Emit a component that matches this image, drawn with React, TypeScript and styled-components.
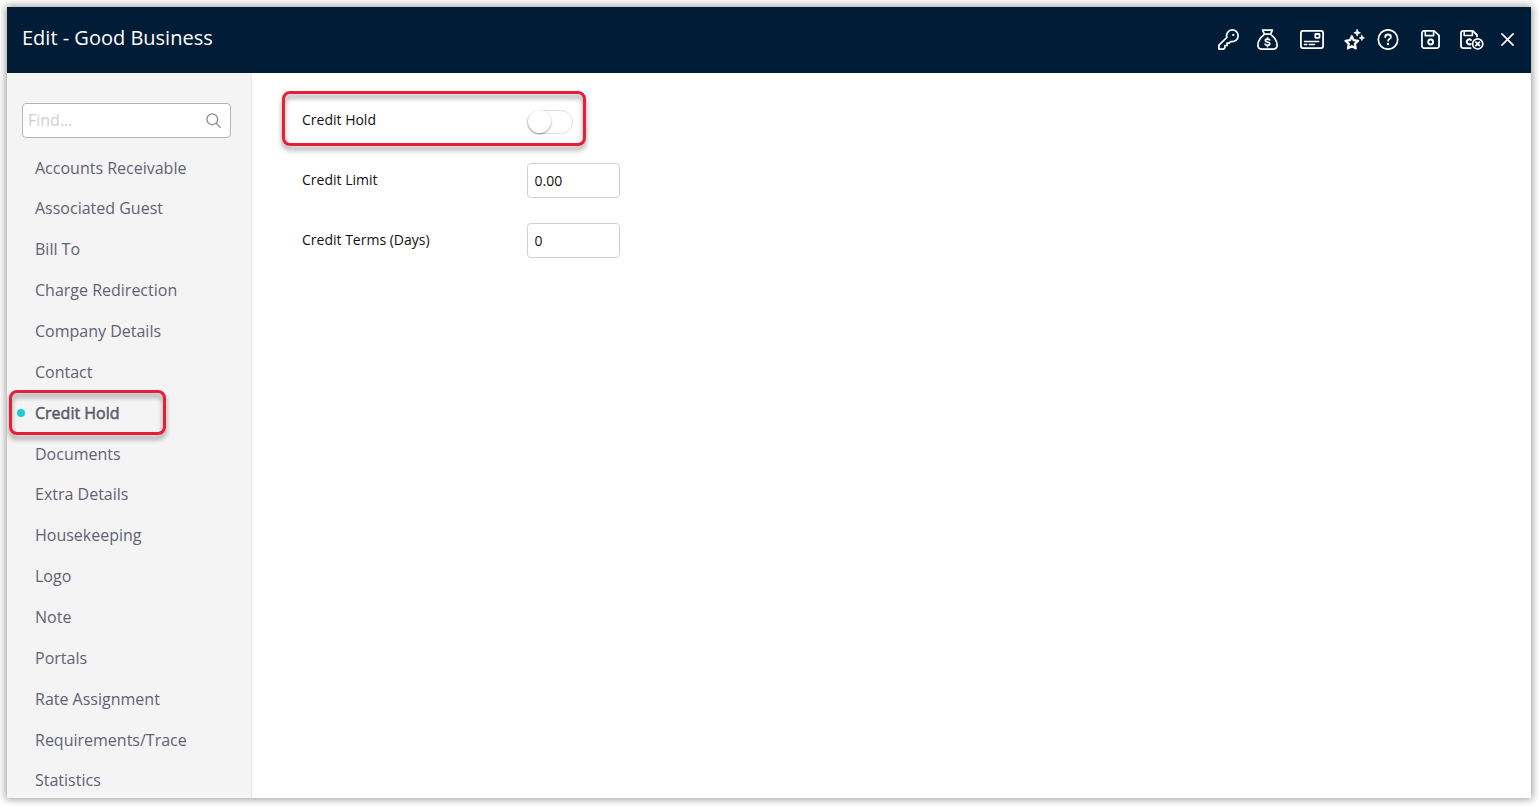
import React from "react";
import styled, { createGlobalStyle, css } from "styled-components";

const GlobalStyle = createGlobalStyle`
  *, *::before, *::after { box-sizing: border-box; }
  body {
    margin: 0;
    background: #fff;
    font-family: "Open Sans", "Noto Sans", sans-serif;
    overflow: hidden;
  }
`;

const Page = styled.div`
  height: 806px;
  padding: 7px 8px 8px 7px;
`;

const Dialog = styled.div`
  display: flex;
  flex-direction: column;
  height: 791px;
  background: #fff;
  box-shadow: 0 0 8px 1px rgba(0, 0, 0, 0.42);
`;

const Header = styled.header`
  display: flex;
  justify-content: space-between;
  flex: 0 0 66px;
  padding: 0 17px 0 15px;
  background: #001c36;
  color: #fff;
`;

const Title = styled.h1`
  margin: 0;
  padding-top: 17px;
  font-size: 20px;
  line-height: 28px;
  font-weight: 400;
`;

const Actions = styled.div`
  display: flex;
  align-items: center;
  height: 65px;
`;

const Action = styled.button<{ $gap?: number }>`
  display: flex;
  margin: 0 0 0 ${(p) => p.$gap ?? 0}px;
  padding: 0;
  border: 0;
  background: none;
  color: #fff;

  svg {
    display: block;
    fill: none;
    stroke: currentColor;
    stroke-width: 1.8;
    stroke-linecap: round;
    stroke-linejoin: round;
  }
`;

const Body = styled.div`
  display: flex;
  flex: 1;
  min-height: 0;
`;

const Sidebar = styled.aside`
  flex: 0 0 245px;
  padding-top: 30px;
  background: #f4f4f4;
  border-right: 1px solid #e8e8e8;
  overflow: hidden;
`;

const Search = styled.label`
  display: flex;
  align-items: center;
  width: 209px;
  height: 35px;
  margin-left: 15px;
  padding: 0 9.5px 0 5px;
  background: #fff;
  border: 1px solid #b4b4b4;
  border-radius: 4px;

  svg {
    flex: none;
  }
`;

const SearchInput = styled.input`
  flex: 1;
  min-width: 0;
  padding: 0 0 2px;
  border: 0;
  outline: 0;
  background: none;
  font: 16px "Open Sans", sans-serif;

  &::placeholder {
    color: #cfcfcf;
  }
`;

const Menu = styled.ul`
  margin: 9.125px 0 0;
  padding: 0;
  list-style: none;
`;

const MenuItem = styled.li<{ $active?: boolean }>`
  position: relative;
  display: flex;
  align-items: center;
  height: 40.86px;
  padding-left: 28px;
  font-size: 16px;
  line-height: 22px;
  color: #626273;
  ${(p) =>
    p.$active &&
    css`
      color: #5a5a6c;
      -webkit-text-stroke: 0.5px #5a5a6c;

      &::before {
        content: "";
        position: absolute;
        left: 10px;
        top: 16.3px;
        width: 8px;
        height: 8px;
        border-radius: 50%;
        background: #1fcbd6;
      }
    `}
`;

const Highlight = styled.span<{ $x: number; $y: number; $w: number; $h: number }>`
  position: absolute;
  left: ${(p) => p.$x}px;
  top: ${(p) => p.$y}px;
  width: ${(p) => p.$w}px;
  height: ${(p) => p.$h}px;
  border: 3px solid #e51f35;
  border-radius: 8px;
  filter: drop-shadow(0 4px 2.5px rgba(0, 0, 0, 0.42));
  pointer-events: none;
`;

const Content = styled.main`
  flex: 1;
  padding: 30px 0 0 50px;
`;

const Field = styled.div`
  position: relative;
  display: flex;
  height: 60px;
`;

const FieldLabel = styled.label`
  width: 225px;
  padding-top: 7px;
  font-size: 14px;
  line-height: 20px;
  color: #111;
`;

const FieldInput = styled.input`
  width: 93px;
  height: 35px;
  padding: 0 6.5px 1px;
  border: 1px solid #d0d0d0;
  border-radius: 4px;
  background: #fff;
  outline: 0;
  font: 14px "Open Sans", sans-serif;
  color: #111;
`;

const Toggle = styled.button`
  display: flex;
  width: 46px;
  height: 24px;
  margin: 7px 0 0;
  padding: 0;
  border: 1px solid #dedede;
  border-radius: 12px;
  background: #fff;
`;

const Knob = styled.span`
  width: 23px;
  height: 23px;
  margin: -1px 0 0 -0.5px;
  border-radius: 50%;
  background: #fff;
  box-shadow: 0 1px 2px rgba(0, 0, 0, 0.4);
`;

const items = [
  "Accounts Receivable",
  "Associated Guest",
  "Bill To",
  "Charge Redirection",
  "Company Details",
  "Contact",
  "Credit Hold",
  "Documents",
  "Extra Details",
  "Housekeeping",
  "Logo",
  "Note",
  "Portals",
  "Rate Assignment",
  "Requirements/Trace",
  "Statistics",
];

const KeyIcon = () => (
  <svg width="21" height="21" viewBox="0 0 22 22">
    <path d="M9.2 8.9C8.2 4.6 10.9 1 14.9 1c3.5 0 6.2 2.6 6.2 6 0 4.2-3.6 7-7.7 6.1L11.6 14.9H9.500v2.400H7.300v2.300L6 21H1v-4z" />
    <circle cx="16" cy="6.200" r="1.200" fill="currentColor" stroke="none" />
  </svg>
);

const MoneyIcon = () => (
  <svg width="21" height="21" viewBox="0 0 22 22">
    <path d="M7.700 5.300 5.900 1.100h10.200l-1.800 4.200zM7.700 5.600C4.800 8 .9 12.600.9 16.700.9 19.800 3 21 5.400 21h11.200c2.400 0 4.500-1.200 4.500-4.300 0-4.100-3.900-8.700-6.800-11.100" />
    <path d="M13.300 11.400c-.5-.7-1.300-.9-2.300-.9-1.400 0-2.300.6-2.300 1.600 0 2.300 4.700 1 4.700 3.300 0 1-1 1.700-2.400 1.700-1.100 0-2-.4-2.500-1.100M11 9.200v1.300M11 17.100v1.300" />
  </svg>
);

const CardIcon = () => (
  <svg width="24" height="19" viewBox="0 0 24 19">
    <rect x="0.900" y="0.900" width="22.200" height="17.200" rx="2" />
    <rect x="15.300" y="4" width="4.200" height="3.800" rx="0.500" />
    <path d="M4.500 11.500h14.200M4.500 14.500h2.300M9.300 14.500h5.200" strokeWidth="1.500" />
  </svg>
);

const StarsIcon = () => (
  <svg width="21" height="21" viewBox="0 0 22 22">
    <path d="M8.200 7.600 10.100 11.700l4.700.6-3.400 3.300.9 4.700-4.100-2.300-4.100 2.300.9-4.700L1.600 12.300l4.700-.6z" strokeWidth="2.300" />
    <path d="M13.800.5 14.800 3l2.500 1-2.500 1-1 2.500-1-2.500-2.500-1 2.500-1zM18.700 6.500l.8 2 2 .8-2 .8-.8 2-.8-2-2-.8 2-.8z" fill="currentColor" strokeWidth="0.700" />
  </svg>
);

const HelpIcon = () => (
  <svg width="22" height="21" viewBox="0 0 22 21">
    <circle cx="11" cy="10.500" r="9.700" strokeWidth="1.700" />
    <path d="M8.200 8.100c.1-1.700 1.200-2.600 2.800-2.600 1.700 0 2.900 1 2.900 2.400 0 2-2.800 2.200-2.800 3.900" />
    <circle cx="11" cy="15" r="1.200" fill="currentColor" stroke="none" />
  </svg>
);

const SaveIcon = () => (
  <svg width="19" height="19" viewBox="0.3 0.1 19.500 19.500">
    <path d="M3.500 1H13.600L18.800 5.700V16.500a2.200 2.200 0 0 1-2.200 2.200H3.500A2.200 2.200 0 0 1 1.300 16.500V3.200A2.200 2.200 0 0 1 3.500 1z" />
    <path d="M4.700 1.300V5.900H13.200V1.300" strokeWidth="1.600" />
    <circle cx="10.200" cy="12.400" r="2.500" strokeWidth="2" />
  </svg>
);

const SaveCloseIcon = () => (
  <svg width="24" height="20" viewBox="0 0 24 20">
    <path d="M10.600 18.100H3.200A2.200 2.200 0 0 1 1 15.900V3.100A2.200 2.200 0 0 1 3.200.9H12.900L17 5V6.400" />
    <path d="M4.200 1.200V5.500H12.400V1.200" strokeWidth="1.600" />
    <path d="M11 9.900A2.500 2.500 0 1 0 10.600 14" strokeWidth="2" />
    <circle cx="17.700" cy="13.900" r="5.100" strokeWidth="1.700" />
    <path d="M15.900 12.100l3.600 3.600M19.500 12.100l-3.600 3.600" strokeWidth="1.700" />
  </svg>
);

const CloseIcon = () => (
  <svg width="13" height="13" viewBox="0 0 13 13">
    <path d="M.9.9l11.200 11.200M12.100.9.9 12.100" strokeWidth="1.600" />
  </svg>
);

const actions = [
  { label: "Access", icon: <KeyIcon />, gap: 0 },
  { label: "Account", icon: <MoneyIcon />, gap: 18 },
  { label: "Card", icon: <CardIcon />, gap: 22 },
  { label: "Favourites", icon: <StarsIcon />, gap: 20 },
  { label: "Help", icon: <HelpIcon />, gap: 12 },
  { label: "Save", icon: <SaveIcon />, gap: 22 },
  { label: "Save and close", icon: <SaveCloseIcon />, gap: 20 },
  { label: "Close", icon: <CloseIcon />, gap: 17 },
];

export default function App() {
  return (
    <>
      <GlobalStyle />
      <Page>
        <Dialog>
          <Header>
            <Title>Edit - Good Business</Title>
            <Actions>
              {actions.map((a) => (
                <Action key={a.label} aria-label={a.label} $gap={a.gap}>
                  {a.icon}
                </Action>
              ))}
            </Actions>
          </Header>
          <Body>
            <Sidebar>
              <Search>
                <SearchInput placeholder="Find..." />
                <svg width="15" height="15" viewBox="0 0 15 15" fill="none" stroke="#8c8c8c" strokeWidth="1.300" strokeLinecap="round">
                  <circle cx="6.300" cy="6.300" r="5.400" />
                  <path d="M10.300 10.300 14.200 14.200" />
                </svg>
              </Search>
              <Menu>
                {items.map((item) => (
                  <MenuItem key={item} $active={item === "Credit Hold"}>
                    {item}
                    {item === "Credit Hold" && <Highlight $x={2} $y={-2.280} $w={157} $h={45} />}
                  </MenuItem>
                ))}
              </Menu>
            </Sidebar>
            <Content>
              <Field>
                <FieldLabel>Credit Hold</FieldLabel>
                <Toggle role="switch" aria-checked={false}>
                  <Knob />
                </Toggle>
                <Highlight $x={-20} $y={-12} $w={304} $h={55} />
              </Field>
              <Field>
                <FieldLabel>Credit Limit</FieldLabel>
                <FieldInput defaultValue="0.00" />
              </Field>
              <Field>
                <FieldLabel>Credit Terms (Days)</FieldLabel>
                <FieldInput defaultValue="0" />
              </Field>
            </Content>
          </Body>
        </Dialog>
      </Page>
    </>
  );
}
